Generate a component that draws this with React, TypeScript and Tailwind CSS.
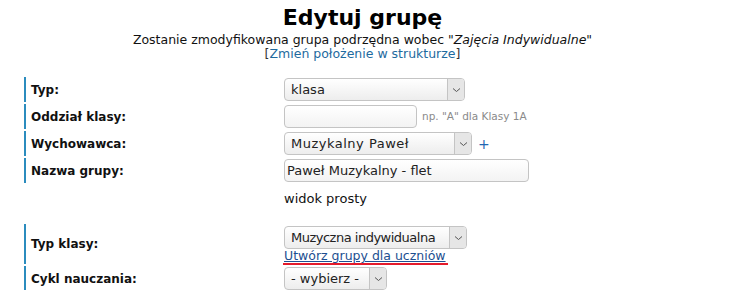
import React from 'react';

const Chevron = () => (
  <svg width="9" height="6" viewBox="0 0 9 6" fill="none">
    <path d="M1 1.5 L4.5 4.5 L8 1.5" stroke="#555" strokeWidth="1" />
  </svg>
);

interface SelectProps {
  value: string;
  className: string;
  textClass?: string;
}

const FakeSelect = ({ value, className, textClass = '' }: SelectProps) => (
  <div
    className={`flex h-[23px] items-stretch rounded-[4px] border border-[#c4c4c4] bg-gradient-to-b from-white to-[#ededed] text-[13px] text-[#222] ${className}`}
  >
    <span className={`flex flex-1 items-center overflow-hidden whitespace-nowrap pl-[6px] leading-none ${textClass}`}>
      {value}
    </span>
    <span className="flex w-[17px] shrink-0 items-center justify-center rounded-r-[3px] border-l border-[#c4c4c4] bg-[#e6e6e6]">
      <Chevron />
    </span>
  </div>
);

const FakeInput = ({ value, className }: SelectProps) => (
  <div
    className={`flex h-[23px] items-center rounded-[4px] border border-[#c4c4c4] bg-gradient-to-b from-white to-[#f3f3f3] pl-[2px] text-[13px] text-[#222] ${className}`}
  >
    {value}
  </div>
);

const Row = ({ label, children, className = 'h-[25px]' }: { label: string; children: React.ReactNode; className?: string }) => (
  <div className={`grid grid-cols-[258px_1fr] items-center border-l-2 border-[#2b8cbe] ${className}`}>
    <span className="pl-[5px] text-[12px] font-bold text-[#111]">{label}</span>
    <div>{children}</div>
  </div>
);

export default function App() {
  return (
    <div className="h-[290px] w-[743px] overflow-hidden bg-white font-['DejaVu_Sans',sans-serif] text-[#111]">
      <div className="flex w-[725px] flex-col items-center pt-[2px]">
        <h1 className="text-[22px] font-bold leading-[31px] text-black">Edytuj grupę</h1>
        <p className="text-[12.5px] leading-[14px]">
          Zostanie zmodyfikowana grupa podrzędna wobec "<i>Zajęcia Indywidualne</i>"
        </p>
        <p className="text-[12.5px] leading-[14px]">
          <span className="text-[#333]">[</span>
          <a className="text-[#1e6a9e]">Zmień położenie w strukturze</a>
          <span className="text-[#333]">]</span>
        </p>
      </div>

      <div className="ml-[24px] mt-[16px] flex flex-col gap-[2px]">
        <Row label="Typ:">
          <FakeSelect value="klasa" className="w-[181px]" />
        </Row>
        <Row label="Oddział klasy:">
          <div className="flex items-center gap-[5px]">
            <FakeInput value="" className="w-[133px]" />
            <span className="text-[10.5px] text-[#8a8a8a]">np. "A" dla Klasy 1A</span>
          </div>
        </Row>
        <Row label="Wychowawca:">
          <div className="flex items-center gap-[6px]">
            <FakeSelect value="Muzykalny Paweł" className="w-[188px]" textClass="tracking-[0.5px]" />
            <span className="text-[14px] leading-none text-[#1f66b3]">+</span>
          </div>
        </Row>
        <Row label="Nazwa grupy:">
          <FakeInput value="Paweł Muzykalny - flet" className="w-[245px]" />
        </Row>
        <div className="grid h-[37px] grid-cols-[260px_1fr]">
          <span />
          <span className="pt-[4px] text-[13px] text-[#111]">widok prosty</span>
        </div>
        <Row label="Typ klasy:" className="h-[40px]">
          <div className="flex flex-col items-start pt-[1px]">
            <FakeSelect value="Muzyczna indywidualna" className="w-[183px]" textClass="tracking-[-0.5px]" />
            <a className="relative text-[12.5px] leading-[14px] text-[#1d4f91] underline">
              Utwórz grupy dla uczniów
              <span className="absolute -left-[1px] -right-[2px] bottom-[-2px] h-[2px] bg-[#e41b2c]" />
            </a>
          </div>
        </Row>
        <Row label="Cykl nauczania:">
          <FakeSelect value="- wybierz -" className="w-[103px]" />
        </Row>
      </div>
    </div>
  );
}
